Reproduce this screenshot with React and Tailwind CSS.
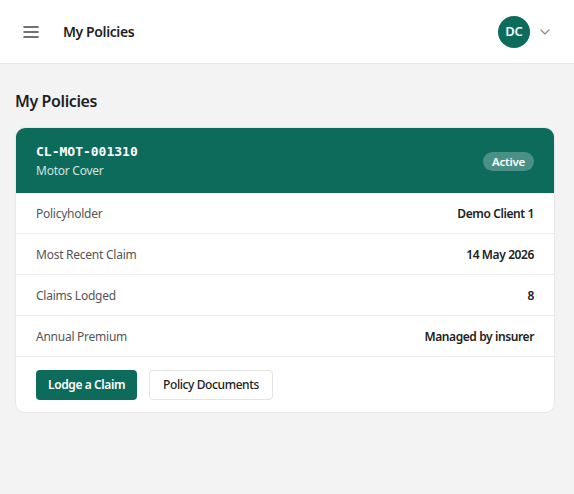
import React from 'react';

const rows = [
  { label: 'Policyholder', value: 'Demo Client 1' },
  { label: 'Most Recent Claim', value: '14 May 2026' },
  { label: 'Claims Lodged', value: '8' },
  { label: 'Annual Premium', value: 'Managed by insurer' },
];

const App = () => {
  return (
    <div
      className="min-h-[494px] bg-[#f3f3f3] text-[#1f1f1f] tracking-[-0.25px]"
      style={{ fontFamily: '"Noto Sans", "Open Sans", sans-serif' }}
    >
      {/* Top bar */}
      <header className="h-[64px] bg-white border-b border-[#e6e6e6] flex items-center pl-[23px] pr-[24px]">
        <button className="text-[#444] mr-[24px]">
          <svg width="16" height="12" viewBox="0 0 16 12" fill="none" stroke="currentColor" strokeWidth="1.6" strokeLinecap="round">
            <path d="M1 1h14M1 6h14M1 11h14" />
          </svg>
        </button>
        <h1 className="text-[14px] font-semibold tracking-[-0.4px]">My Policies</h1>
        <div className="ml-auto flex items-center gap-[10px]">
          <div className="w-[32px] h-[32px] rounded-full bg-[#0d6b5c] text-white text-[13px] font-semibold flex items-center justify-center">
            DC
          </div>
          <svg width="10" height="6" viewBox="0 0 10 6" fill="none" stroke="#8a8a8a" strokeWidth="1.2" strokeLinecap="round" strokeLinejoin="round">
            <path d="M1 1l4 4 4-4" />
          </svg>
        </div>
      </header>

      <main className="pl-[15px] pr-[19px] pt-[25px]">
        <h2 className="text-[16px] font-semibold mb-[14px] tracking-[-0.4px]">My Policies</h2>

        <div className="bg-white rounded-[10px] border border-[#e8e8e8] overflow-hidden">
          {/* Card header */}
          <div className="bg-[#0d6b5c] h-[65px] px-[20px] pt-[2px] flex items-center justify-between">
            <div>
              <div
                className="text-white text-[13px] font-bold leading-[18px] tracking-normal"
                style={{ fontFamily: '"DejaVu Sans Mono", "Liberation Mono", monospace' }}
              >
                CL-MOT-001310
              </div>
              <div className="text-[#cfe3de] text-[12px] leading-[18px] mt-[1px]">Motor Cover</div>
            </div>
            <span className="bg-white/25 text-white text-[11.5px] font-semibold px-[9px] py-[1px] rounded-full">
              Active
            </span>
          </div>

          {/* Rows */}
          {rows.map((r) => (
            <div key={r.label} className="h-[41px] px-[20px] pt-[2px] flex items-center justify-between border-b border-[#ececec]">
              <span className="text-[12px] text-[#555]">{r.label}</span>
              <span className="text-[12px] font-semibold text-[#222] tracking-[-0.4px]">{r.value}</span>
            </div>
          ))}

          {/* Actions */}
          <div className="px-[20px] pt-[13px] pb-[12px] flex gap-[12px]">
            <button className="h-[30px] px-[12px] rounded-[4px] bg-[#0d6b5c] text-white text-[12px] font-semibold tracking-[-0.4px]">
              Lodge a Claim
            </button>
            <button className="h-[30px] px-[13px] rounded-[4px] border border-[#e3e3e3] bg-white text-[#222] text-[12px] font-medium tracking-[-0.4px]">
              Policy Documents
            </button>
          </div>
        </div>
      </main>
    </div>
  );
};

export default App;
